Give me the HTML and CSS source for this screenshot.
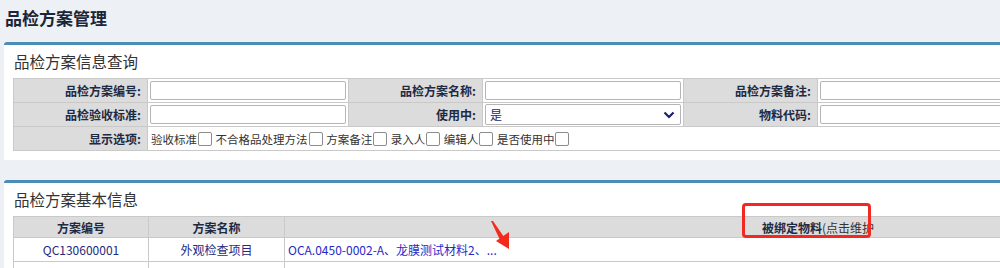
FILE: index.html
```html
<!DOCTYPE html>
<html lang="zh-CN">
<head>
    <meta charset="UTF-8">
    <title>品检方案管理</title>
    <link rel="stylesheet" href="styles.css">
</head>
<body>
    <h1 class="page-title">品检方案管理</h1>

    <!-- 查询 -->
    <div class="panel panel-query">
        <div class="panel-title">品检方案信息查询</div>
        <table class="query-table">
            <tr>
                <td class="label">品检方案编号:</td>
                <td class="field"><input type="text"></td>
                <td class="label">品检方案名称:</td>
                <td class="field"><input type="text"></td>
                <td class="label">品检方案备注:</td>
                <td class="field"><input type="text"></td>
            </tr>
            <tr>
                <td class="label">品检验收标准:</td>
                <td class="field"><input type="text"></td>
                <td class="label">使用中:</td>
                <td class="field">
                    <div class="select">
                        <span>是</span>
                        <svg width="12" height="8" viewBox="0 0 12 8"><path d="M1.5 1.5 L6 6 L10.5 1.5" fill="none" stroke="#1e1e6e" stroke-width="2.2"/></svg>
                    </div>
                </td>
                <td class="label">物料代码:</td>
                <td class="field"><input type="text"></td>
            </tr>
            <tr>
                <td class="label">显示选项:</td>
                <td class="options" colspan="5">
                    <span class="opt">验收标准<i class="box"></i></span>
                    <span class="opt">不合格品处理方法<i class="box"></i></span>
                    <span class="opt">方案备注<i class="box"></i></span>
                    <span class="opt">录入人<i class="box"></i></span>
                    <span class="opt">编辑人<i class="box"></i></span>
                    <span class="opt">是否使用中<i class="box"></i></span>
                </td>
            </tr>
        </table>
    </div>

    <!-- 列表 -->
    <div class="panel panel-list">
        <div class="panel-title">品检方案基本信息</div>
        <table class="list-table">
            <tr class="head">
                <th class="col-no">方案编号</th>
                <th class="col-name">方案名称</th>
                <th class="col-mat">被绑定物料<span class="hint">(点击维护</span></th>
            </tr>
            <tr>
                <td>QC130600001</td>
                <td>外观检查项目</td>
                <td class="link">OCA.0450-0002-A、龙膜测试材料2、...</td>
            </tr>
            <tr class="empty">
                <td></td><td></td><td></td>
            </tr>
        </table>
    </div>

    <!-- 标注 -->
    <div class="mark-box"></div>
    <svg class="mark-arrow" width="30" height="34" viewBox="0 0 30 34">
        <path d="M2 1 L4 1 L15 17 L11 20 Z" fill="#f42a1c"/>
        <path d="M7 21 L20 12 L20 29 Z" fill="#f42a1c"/>
    </svg>
</body>
</html>
```

FILE: styles.css
```css
body {
    margin: 0;
    background-color: #edf0f5;
    font-family: "Noto Sans CJK SC", "Liberation Sans", sans-serif;
    overflow: hidden;
    height: 268px;
    position: relative;
}

.page-title {
    margin: 0;
    padding: 6px 5px 0;
    height: 30px;
    font-size: 17px;
    line-height: 24px;
    font-weight: bold;
    color: #1b2638;
}

.panel {
    margin-left: 4px;
    width: 1400px;
    background: #fff;
    border-top: 3px solid #4a8db5;
    border-radius: 3px 0 0 0;
}

.panel-query {
    margin-top: 6px;
    height: 115px;
}

.panel-list {
    margin-top: 20px;
    height: 100px;
}

.panel-title {
    padding-left: 10px;
    height: 33px;
    line-height: 33px;
    font-size: 15.5px;
    color: #333;
}

table {
    border-collapse: collapse;
    margin-left: 9px;
    font-size: 12px;
}

td, th {
    border: 1px solid #c9c9c9;
    padding: 0;
}

.query-table tr {
    height: 24px;
}

.query-table .label {
    width: 134px;
    background: #dcdcdc;
    text-align: right;
    padding-right: 6px;
    font-weight: bold;
    color: #1c2a44;
    box-sizing: border-box;
}

.query-table .field {
    width: 201px;
    padding: 0 2px;
    box-sizing: border-box;
}

.field input {
    display: block;
    width: 100%;
    height: 19px;
    box-sizing: border-box;
    border: 1px solid #b5b5b5;
    border-radius: 2px;
    margin: 0;
}

.select {
    display: flex;
    align-items: center;
    justify-content: space-between;
    height: 19px;
    border: 1px solid #b5b5b5;
    border-radius: 2px;
    padding: 0 5px 0 4px;
    color: #1e1e6e;
    font-size: 12px;
}

.options {
    padding-left: 3px;
    color: #333;
    font-size: 11.5px;
    white-space: nowrap;
}

.opt {
    display: inline-flex;
    align-items: center;
    margin-right: 1px;
}

.box {
    display: inline-block;
    width: 12px;
    height: 12px;
    border: 1px solid #8c8c8c;
    border-radius: 2px;
    margin-left: 1px;
    background: #fff;
}

.list-table tr.head {
    height: 21px;
    background: #dcdcdc;
}

.list-table th {
    font-weight: bold;
    color: #1c2a44;
    font-size: 12px;
}

.list-table th .hint {
    font-weight: normal;
    color: #333;
}

.list-table tr {
    height: 24px;
}

.list-table td {
    text-align: center;
    color: #1f2a80;
}

.col-no { width: 134px; }
.col-name { width: 135px; }
.col-mat { width: 1066px; }

.list-table td.link {
    text-align: left;
    padding-left: 3px;
    color: #2828c8;
}

.mark-box {
    position: absolute;
    left: 742px;
    top: 203px;
    width: 123px;
    height: 29px;
    border: 3px solid #f02a23;
    border-radius: 4px;
}

.mark-arrow {
    position: absolute;
    left: 489px;
    top: 220px;
}
```
